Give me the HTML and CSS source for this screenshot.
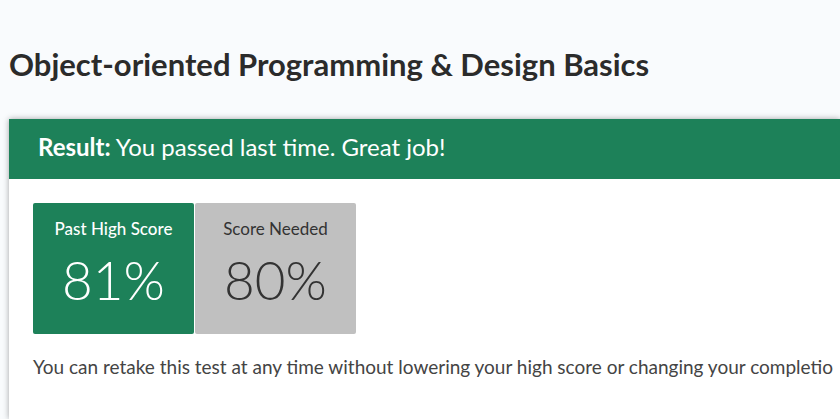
FILE: index.html
```html
<!DOCTYPE html>
<html lang="en">
<head>
<meta charset="utf-8">
<title>Object-oriented Programming &amp; Design Basics</title>
<link rel="stylesheet" href="styles.css">
</head>
<body>
<main class="page">
  <h1 class="title">Object-oriented Programming &amp; Design Basics</h1>
  <section class="card">
    <h2 class="banner"><strong>Result:</strong> You passed last time. Great job!</h2>
    <div class="content">
      <div class="scores">
        <div class="score score-past">
          <span class="score-label">Past High Score</span>
          <span class="score-value">81%</span>
        </div>
        <div class="score score-needed">
          <span class="score-label">Score Needed</span>
          <span class="score-value">80%</span>
        </div>
      </div>
      <p class="note">You can retake this test at any time without lowering your high score or changing your completio</p>
    </div>
  </section>
</main>
</body>
</html>
```
FILE: styles.css
```css
* {
  box-sizing: border-box;
}

body {
  margin: 0;
  min-height: 100vh;
  background: #f9fbfd;
  color: #2b2b2b;
  font-family: Lato, "Liberation Sans", sans-serif;
}

.page {
  display: flex;
  flex-direction: column;
  min-height: 100vh;
  padding: 44px 0 0 9px;
}

.title {
  margin: 0 0 35px;
  font-size: 31px;
  line-height: 40px;
  font-weight: 700;
}

.card {
  flex: 1;
  background: #fff;
  box-shadow: 0 0 6px rgba(0, 0, 0, 0.35);
}

.banner {
  margin: 0;
  padding: 12px 29px 16px;
  background: #1d8159;
  color: #fff;
  font-size: 24px;
  line-height: 32px;
  font-weight: 400;
}

.content {
  padding: 24px 0 24px 24px;
}

.scores {
  display: flex;
  gap: 1px;
}

.score {
  display: flex;
  flex-direction: column;
  align-items: center;
  width: 161px;
  padding: 15px 0 22px;
  border-radius: 2px;
}

.score-past {
  background: #1d8159;
  color: #fff;
}

.score-past .score-label {
  font-weight: 500;
}

.score-needed {
  background: #c0c0c0;
  color: #333;
}

.score-label {
  font-size: 17px;
  line-height: 22px;
}

.score-value {
  margin-top: 8px;
  font-size: 53px;
  line-height: 64px;
  font-weight: 300;
}

.note {
  margin: 20px 0 0;
  font-size: 19px;
  line-height: 26px;
  color: #444;
  white-space: nowrap;
}
```
